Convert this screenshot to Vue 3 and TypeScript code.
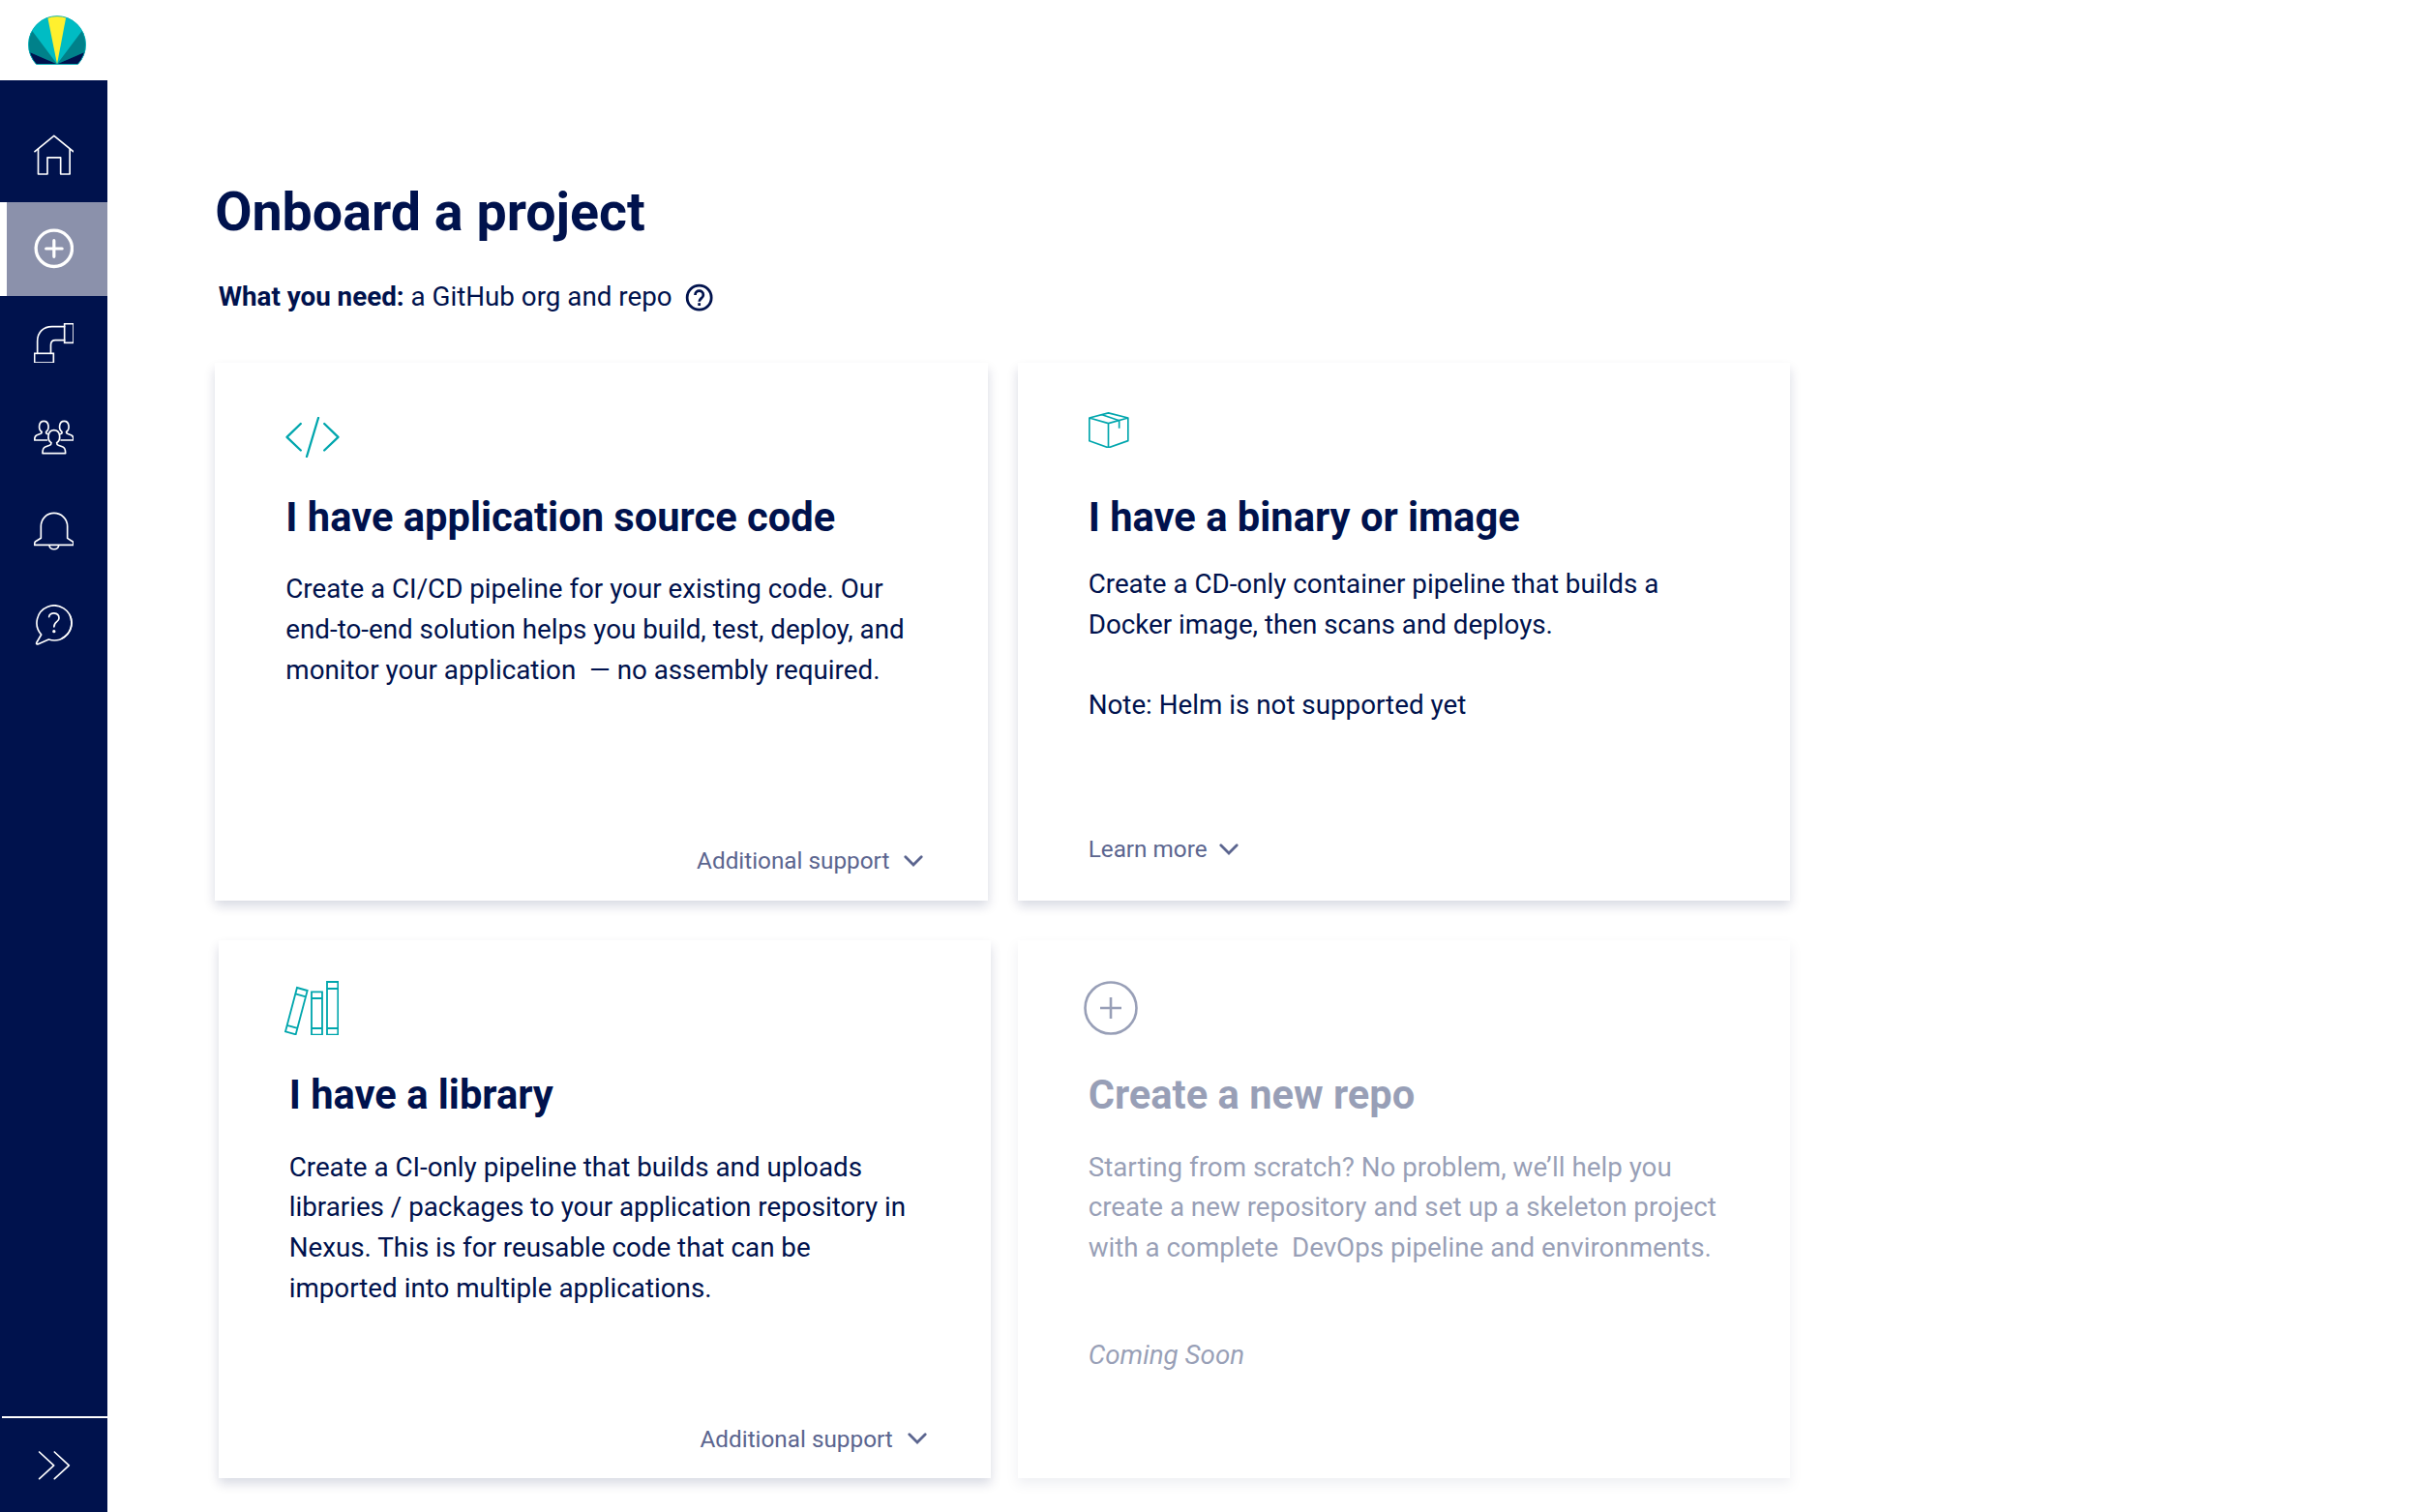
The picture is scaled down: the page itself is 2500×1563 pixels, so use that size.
<script setup lang="ts">
import { ref } from 'vue'

type IconName = 'code' | 'box' | 'books' | 'plus'

interface ProjectCard {
  id: string
  icon: IconName
  title: string
  text: string
  link?: string
  note?: string
}

const navItems = ['home', 'onboard', 'pipelines', 'teams', 'alerts', 'help']
const activeItem = ref('onboard')

const cards: ProjectCard[] = [
  {
    id: 'source',
    icon: 'code',
    title: 'I have application source code',
    text: 'Create a CI/CD pipeline for your existing code. Our\nend-to-end solution helps you build, test, deploy, and\nmonitor your application  — no assembly required.',
    link: 'Additional support',
  },
  {
    id: 'binary',
    icon: 'box',
    title: 'I have a binary or image',
    text: 'Create a CD-only container pipeline that builds a\nDocker image, then scans and deploys.\n\nNote: Helm is not supported yet',
    link: 'Learn more',
  },
  {
    id: 'library',
    icon: 'books',
    title: 'I have a library',
    text: 'Create a CI-only pipeline that builds and uploads\nlibraries / packages to your application repository in\nNexus. This is for reusable code that can be\nimported into multiple applications.',
    link: 'Additional support',
  },
  {
    id: 'new-repo',
    icon: 'plus',
    title: 'Create a new repo',
    text: 'Starting from scratch? No problem, we’ll help you\ncreate a new repository and set up a skeleton project\nwith a complete  DevOps pipeline and environments.',
    note: 'Coming Soon',
  },
]
</script>

<template>
  <div class="layout">
    <aside class="sidebar">
      <div class="logo">
        <svg viewBox="87 48 180 153">
          <clipPath id="logo-clip">
            <path d="M113 200A89 89 0 1 1 241 200Z" />
          </clipPath>
          <g clip-path="url(#logo-clip)">
            <rect x="87" y="48" width="180" height="153" fill="#00bcc4" />
            <path d="M177 199L141 20H211Z" fill="#fff02e" />
            <path d="M177 199L80 69V157Z" fill="#00818a" />
            <path d="M177 199L274 69V157Z" fill="#00818a" />
            <path d="M177 199L80 157V199Z" fill="#00124d" />
            <path d="M177 199L274 157V199Z" fill="#00124d" />
          </g>
          <path d="M113 199.5A88.500 88.500 0 1 1 241 199.500Z" fill="none" stroke="#00aeb6" stroke-width="2.5" />
        </svg>
      </div>

      <nav class="nav">
        <a
          v-for="item in navItems"
          :key="item"
          class="nav-item"
          :class="{ active: item === activeItem }"
          @click="activeItem = item"
        >
          <svg class="nav-icon" viewBox="0 0 125 125">
            <g v-if="item === 'home'">
              <path d="M3 53L62.500 4L122 53" />
              <path d="M13.500 46V123H42V71.500H83V123H111.500V46" />
            </g>
            <g v-else-if="item === 'onboard'">
              <circle cx="62.500" cy="62.500" r="56" stroke-width="10" />
              <path d="M62.500 38V88M38 63H87.500" stroke-width="9.5" />
            </g>
            <g v-else-if="item === 'pipelines'" class="square">
              <rect x="95" y="2" width="28" height="59" />
              <rect x="2" y="94" width="59" height="29" />
              <path d="M11 94V56C11 28 30 11 56 11H95" />
              <path d="M52.500 94V68Q52.500 53 67 53H95" />
            </g>
            <g v-else-if="item === 'teams'">
              <path d="M24 46C13 39 14 13 31 13S49 39 38 46V50L43 53" />
              <path d="M24 46Q25 50 21 52L8 57Q2 60 2 72H41" />
              <path d="M101 46C112 39 111 13 94 13S76 39 87 46V50L82 53" />
              <path d="M101 46Q100 50 104 52L117 57Q123 60 123 72H84" />
              <path d="M54 80C40 71 42 41 62.500 41S85 71 71 80Q71 86 76 88L90 93Q98 96 98 113H27Q27 96 35 93L49 88Q54 86 54 80" />
            </g>
            <g v-else-if="item === 'alerts'">
              <path d="M22 85V48C22 25 40 7 62.500 7S104 25 104 48V85L121 96Q123 98 123 106H2Q2 98 4 96Z" />
              <path d="M48 108C50 123 75 123 77 108" />
            </g>
            <g v-else>
              <path d="M23 93A54 54 0 1 1 46 108L14 122Q5 125 9 117Z" />
              <path d="M113 36A54 54 0 0 1 88 104" />
              <path d="M47 38C48 22 78 22 78 42C78 55 62.500 51 62.500 69" />
              <circle cx="62.500" cy="83" r="2.500" fill="#fff" />
            </g>
          </svg>
        </a>
      </nav>

      <button class="expand" aria-label="Expand">
        <svg class="nav-icon" viewBox="0 0 125 125">
          <path d="M17 21L62 62.500L17 104M64 21L109 62.500L64 104" />
        </svg>
      </button>
    </aside>

    <main class="content">
      <h1 class="page-title">Onboard a project</h1>
      <p class="needs">
        <span><strong>What you need:</strong> a GitHub org and repo</span>
        <svg class="help-icon" viewBox="0 0 24 24">
          <circle cx="12" cy="12" r="9" />
          <path d="M9 10C9 6 15 6 15 10C15 12.500 12 12.500 12 15" />
          <path d="M12 16V18" />
        </svg>
      </p>

      <section class="cards">
        <article v-for="card in cards" :key="card.id" class="card" :class="card.id">
          <div class="card-icon">
            <svg v-if="card.icon === 'code'" class="icon-code" viewBox="0 0 56 42">
              <path d="M15.800 7L1.500 20.800L15.800 34.500M34 1L22 41M40.200 7L54.500 20.800L40.200 34.500" />
            </svg>
            <svg v-else-if="card.icon === 'box'" class="icon-box" viewBox="0 0 125 113">
              <path d="M2.500 18L61.500 2.500L122.500 18V89L61.500 110.500L2.500 89ZM2.500 18L61.500 35L122.500 18M61.500 35V110.500M42 8L95 26V50" />
            </svg>
            <svg v-else-if="card.icon === 'books'" class="icon-books" viewBox="70 40 170 170">
              <path d="M109 61L141 70L105 206L73 197ZM104 80L136 89M78 178L110 187" />
              <path d="M154 74H187V207H154ZM154 94H187M154 187H187" />
              <path d="M202 43H236V207H202ZM202 64H236M202 187H236" />
            </svg>
            <svg v-else class="icon-plus" viewBox="0 0 56 56">
              <circle cx="28" cy="28" r="26.500" />
              <path d="M28 17V39M17 28H39" />
            </svg>
          </div>
          <h2 class="card-title">{{ card.title }}</h2>
          <p class="card-text">{{ card.text }}</p>
          <p v-if="card.note" class="card-note">{{ card.note }}</p>
          <a v-if="card.link" class="card-link">
            {{ card.link }}
            <svg viewBox="0 0 20 12">
              <path d="M1.800 1.800L10 10L18.200 1.800" />
            </svg>
          </a>
        </article>
      </section>
    </main>
  </div>
</template>

<style>
body {
  margin: 0;
  background: #ffffff;
}
</style>

<style scoped>
.layout {
  --navy: #00124d;
  --teal: #00a6ad;
  display: flex;
  height: 1563px;
  overflow: hidden;
  font-family: Roboto, 'Liberation Sans', sans-serif;
  color: var(--navy);
}

.sidebar {
  display: flex;
  flex-direction: column;
  flex: none;
  width: 111px;
  background: var(--navy);
}

.logo {
  box-sizing: border-box;
  height: 83.4px;
  padding: 16px 0 0 29px;
  background: #ffffff;
}

.logo svg {
  display: block;
  width: 60px;
  height: 51px;
}

.nav {
  padding-top: 28px;
}

.nav-item {
  display: flex;
  align-items: center;
  justify-content: center;
  position: relative;
  height: 97.22px;
  cursor: pointer;
}

.nav-item.active {
  background: #8b91ab;
}

.nav-item.active::before {
  content: '';
  position: absolute;
  inset: 0 auto 0 0;
  width: 7px;
  background: #ffffff;
}

.nav-icon {
  display: block;
  width: 41.67px;
  height: 41.67px;
  fill: none;
  stroke: #ffffff;
  stroke-width: 5;
  stroke-linecap: round;
  stroke-linejoin: round;
}

.square {
  stroke-linejoin: miter;
}

.expand {
  display: flex;
  align-items: center;
  justify-content: center;
  height: 99px;
  margin: auto 0 0 2px;
  padding: 0 2px 0 0;
  border: 0;
  border-top: 2px solid #ffffff;
  background: none;
}

.content {
  padding: 186.5px 0 0 111.2px;
}

.page-title {
  margin: 0;
  font-size: 55.56px;
  line-height: 65px;
  font-weight: 700;
}

.needs {
  display: flex;
  align-items: center;
  gap: 11px;
  margin: 34.9px 0 46.9px 3.5px;
  font-size: 27.78px;
  line-height: 41.67px;
}

.help-icon {
  width: 33.33px;
  height: 33.33px;
  fill: none;
  stroke: var(--navy);
  stroke-width: 2;
}

.cards {
  display: grid;
  grid-template-columns: 798.6px 798.6px;
  grid-auto-rows: 555.56px;
  gap: 41.67px 30.8px;
  margin-left: 0.3px;
}

.card {
  box-sizing: border-box;
  display: flex;
  flex-direction: column;
  padding: 0 66.7px 25.8px 72.8px;
  background: #ffffff;
  box-shadow: 0 5.5px 11px rgba(0, 18, 77, 0.16);
}

.card.library {
  width: 798.6px;
  margin-left: 3.4px;
}

.card-icon {
  height: 136.1px;
  flex: none;
}

.card-icon svg {
  display: block;
  fill: none;
  stroke: var(--teal);
}

.icon-code {
  width: 56px;
  height: 42px;
  margin-top: 56px;
  stroke-width: 2.3;
  stroke-linecap: round;
  stroke-linejoin: round;
}

.icon-box {
  width: 41.67px;
  height: 37.67px;
  margin: 50.6px 0 0 0.5px;
  stroke-width: 5;
  stroke-linejoin: round;
}

.icon-books {
  width: 56.67px;
  height: 56.67px;
  margin: 41.4px 0 0 -5px;
  stroke-width: 5.5;
}

.card-icon .icon-plus {
  width: 56px;
  height: 56px;
  margin: 41.5px 0 0 -5px;
  stroke: var(--navy);
  stroke-width: 2.6;
}

.card-title {
  margin: 0 0 28.6px;
  font-size: 41.67px;
  line-height: 48.8px;
  font-weight: 700;
}

.card-text {
  margin: 0;
  font-size: 27.78px;
  line-height: 41.67px;
  white-space: pre;
}

.card-note {
  margin: 69.8px 0 0;
  font-size: 27.78px;
  line-height: 41.67px;
  font-style: italic;
}

.card-link {
  display: flex;
  align-items: center;
  align-self: flex-end;
  gap: 15px;
  margin-top: auto;
  font-size: 24.31px;
  line-height: 29.3px;
  color: #5b658f;
  cursor: pointer;
}

.card-link svg {
  width: 20px;
  height: 12px;
  fill: none;
  stroke: #5b658f;
  stroke-width: 2.8;
  stroke-linecap: round;
}

.card.binary {
  padding-bottom: 38px;
}

.binary .card-title {
  margin-bottom: 23.6px;
}

.binary .card-link {
  align-self: flex-start;
  gap: 12px;
}

.card.new-repo {
  opacity: 0.4;
}
</style>
